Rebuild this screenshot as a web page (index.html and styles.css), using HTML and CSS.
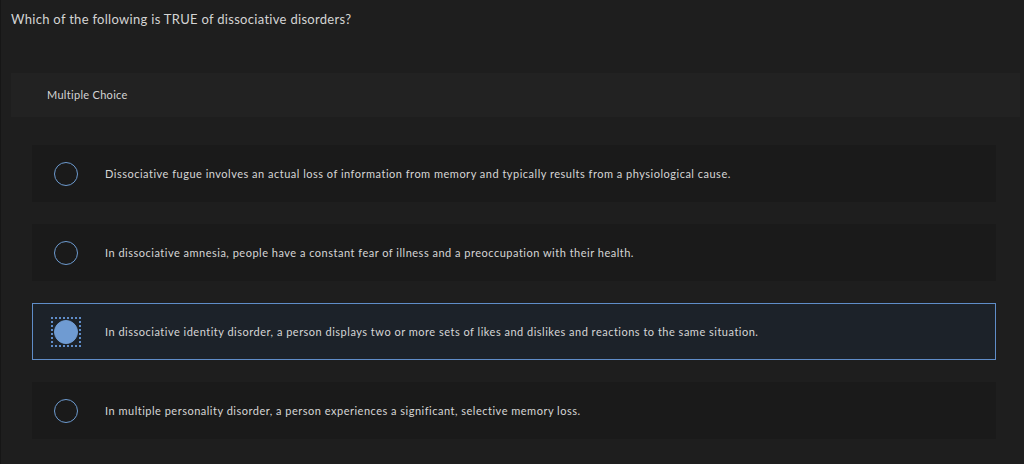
FILE: index.html
```html
<!DOCTYPE html>
<html>
<head>
<meta charset="utf-8">
<link rel="stylesheet" href="styles.css">
</head>
<body>
<div class="page">
  <p class="question">Which of the following is TRUE of dissociative disorders?</p>
  <div class="type-bar">Multiple Choice</div>
  <div class="options">
    <div class="option">
      <span class="radio"></span>
      <span class="label">Dissociative fugue involves an actual loss of information from memory and typically results from a physiological cause.</span>
    </div>
    <div class="option">
      <span class="radio"></span>
      <span class="label">In dissociative amnesia, people have a constant fear of illness and a preoccupation with their health.</span>
    </div>
    <div class="option selected">
      <span class="focus"><span class="radio checked"></span></span>
      <span class="label">In dissociative identity disorder, a person displays two or more sets of likes and dislikes and reactions to the same situation.</span>
    </div>
    <div class="option">
      <span class="radio"></span>
      <span class="label">In multiple personality disorder, a person experiences a significant, selective memory loss.</span>
    </div>
  </div>
</div>
</body>
</html>
```

FILE: styles.css
```css
html, body {
  margin: 0;
  padding: 0;
  background: #1e1e1e;
  width: 1024px;
  height: 464px;
  overflow: hidden;
}
.page {
  font-family: "Lato", "Open Sans", sans-serif;
  color: #d4d4d4;
  padding: 0 4px 0 10px;
  border-left: 1px solid #161616;
  height: 464px;
  box-sizing: border-box;
}
.question {
  margin: 0;
  padding-top: 11px;
  font-size: 13px;
  line-height: 16px;
  letter-spacing: 0.3px;
  height: 73px;
  box-sizing: border-box;
}
.type-bar {
  height: 44px;
  background: #222222;
  font-size: 11px;
  letter-spacing: 0.3px;
  line-height: 44px;
  padding-left: 36px;
}
.options {
  display: flex;
  flex-direction: column;
  gap: 22px;
  padding: 28px 24px 0 21px;
}
.option {
  height: 57px;
  background: #1a1a1a;
  display: flex;
  align-items: center;
  box-sizing: border-box;
  padding-left: 22px;
  font-size: 11px;
  letter-spacing: 0.5px;
}
.option.selected {
  background: #1c2229;
  border: 1px solid #5f8dc8;
  padding-left: 21px;
}
.radio {
  width: 24px;
  height: 24px;
  border: 1px solid #6d9bd0;
  border-radius: 50%;
  box-sizing: border-box;
  flex: none;
  display: block;
}
.radio.checked {
  background: #6f9bd2;
  border-color: #6f9bd2;
}
.focus {
  flex: none;
  padding: 1px;
  border: 2px dotted #5f8dc8;
  margin: -3px;
}
.label {
  margin-left: 27px;
  color: #d6d6d6;
}
```
